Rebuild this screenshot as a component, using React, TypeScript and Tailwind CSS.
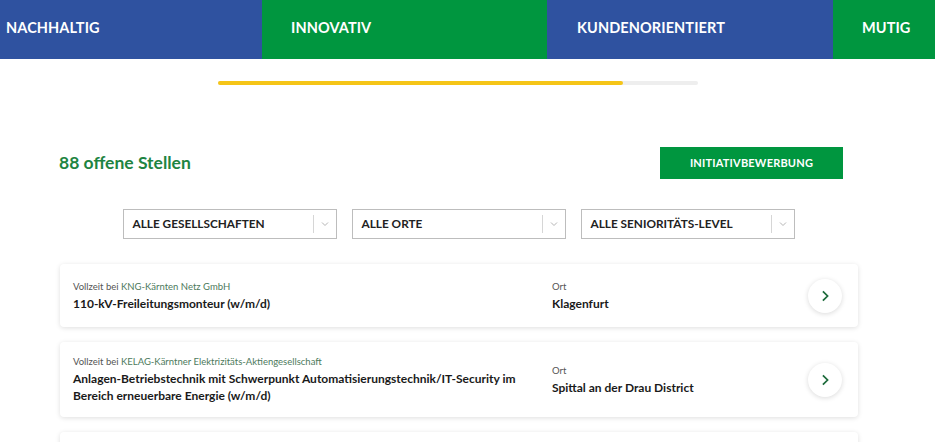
import React from 'react';

const values = [
  { label: 'NACHHALTIG', bg: 'bg-[#2f52a0]', w: 'w-[262px]', pl: 'pl-[6px]' },
  { label: 'INNOVATIV', bg: 'bg-[#00963f]', w: 'w-[285px]', pl: 'pl-[29px]' },
  { label: 'KUNDENORIENTIERT', bg: 'bg-[#2f52a0]', w: 'w-[286px]', pl: 'pl-[30px]' },
  { label: 'MUTIG', bg: 'bg-[#00963f]', w: 'w-[102px]', pl: 'pl-[29px]' },
];

const filters = ['ALLE GESELLSCHAFTEN', 'ALLE ORTE', 'ALLE SENIORITÄTS-LEVEL'];

const jobs = [
  {
    company: 'KNG-Kärnten Netz GmbH',
    title: '110-kV-Freileitungsmonteur (w/m/d)',
    ort: 'Klagenfurt',
  },
  {
    company: 'KELAG-Kärntner Elektrizitäts-Aktiengesellschaft',
    title: 'Anlagen-Betriebstechnik mit Schwerpunkt Automatisierungstechnik/IT-Security im Bereich erneuerbare Energie (w/m/d)',
    ort: 'Spittal an der Drau District',
  },
];

const Chevron = ({ className }: { className?: string }) => (
  <svg viewBox="0 0 12 12" className={className} fill="none" stroke="currentColor">
    <path d="M3 4.5l3 3 3-3" strokeWidth="1" />
  </svg>
);

export default function App() {
  return (
    <div className="w-[935px] h-[442px] overflow-hidden bg-white font-['Lato','Liberation_Sans',sans-serif]">
      {/* Werte-Leiste */}
      <div className="flex h-[59px]">
        {values.map((v) => (
          <div
            key={v.label}
            className={`${v.bg} ${v.w} ${v.pl} shrink-0 flex items-center pb-[4px] text-white font-bold text-[14.5px] tracking-[0.1px]`}
          >
            {v.label}
          </div>
        ))}
      </div>

      <div className="flex justify-start pl-[218px] pt-[22px]">
        <div className="w-[480px] h-[4px] rounded-full bg-[#eeeeee]">
          <div className="w-[405px] h-[4px] rounded-full bg-[#f5c518]" />
        </div>
      </div>

      <div className="ml-[60px] w-[798px]">
        <div className="flex items-center justify-between mt-[62px] pr-[15px]">
          <h2 className="text-[#1e8442] font-bold text-[17.5px] -ml-[1px]">88 offene Stellen</h2>
          <button className="w-[183px] h-[32px] bg-[#00963f] text-white font-bold text-[11px] tracking-[0.2px]">
            INITIATIVBEWERBUNG
          </button>
        </div>

        <div className="flex justify-center gap-[15px] mt-[30px] pr-[1px]">
          {filters.map((f) => (
            <div
              key={f}
              className="w-[214px] h-[30px] border border-[#bdbdbd] flex items-center pl-[9px] text-[11.8px] font-bold text-[#222]"
            >
              <span className="flex-1">{f}</span>
              <span className="w-px h-[18px] bg-[#d6d6d6]" />
              <Chevron className="w-[12px] h-[12px] text-[#b5b5b5] mx-[5px]" />
            </div>
          ))}
        </div>

        <div className="flex flex-col gap-[15px] mt-[25px]">
          {jobs.map((j, i) => (
            <div
              key={i}
              className="bg-white rounded-[4px] shadow-[0_1px_5px_rgba(0,0,0,0.13)] flex items-center pl-[13px] pr-[16px] py-[13px] min-h-[63px]"
            >
              <div className="w-[479px] pr-[20px] text-[#1a1a1a]">
                <div className="text-[9.5px] leading-[14px] text-[#555]">
                  Vollzeit bei <span className="text-[#4d7a5c]">{j.company}</span>
                </div>
                <div className="text-[12px] font-bold leading-[17px] mt-[1px]">{j.title}</div>
              </div>
              <div className="flex-1 text-[#1a1a1a]">
                <div className="text-[9.5px] leading-[14px] text-[#555]">Ort</div>
                <div className="text-[12px] font-bold leading-[17px] mt-[1px]">{j.ort}</div>
              </div>
              <div className="w-[34px] h-[34px] rounded-full bg-white shadow-[0_1px_5px_rgba(0,0,0,0.15)] flex items-center justify-center">
                <svg viewBox="0 0 12 12" className="w-[14px] h-[14px] text-[#1d6b3b]" fill="none" stroke="currentColor">
                  <path d="M4.2 2l4 4-4 4" strokeWidth="1.5" />
                </svg>
              </div>
            </div>
          ))}
          {/* nächste Karte, nur oberer Rand sichtbar */}
          <div className="bg-white rounded-[4px] shadow-[0_1px_5px_rgba(0,0,0,0.13)] h-[63px]" />
        </div>
      </div>
    </div>
  );
}
